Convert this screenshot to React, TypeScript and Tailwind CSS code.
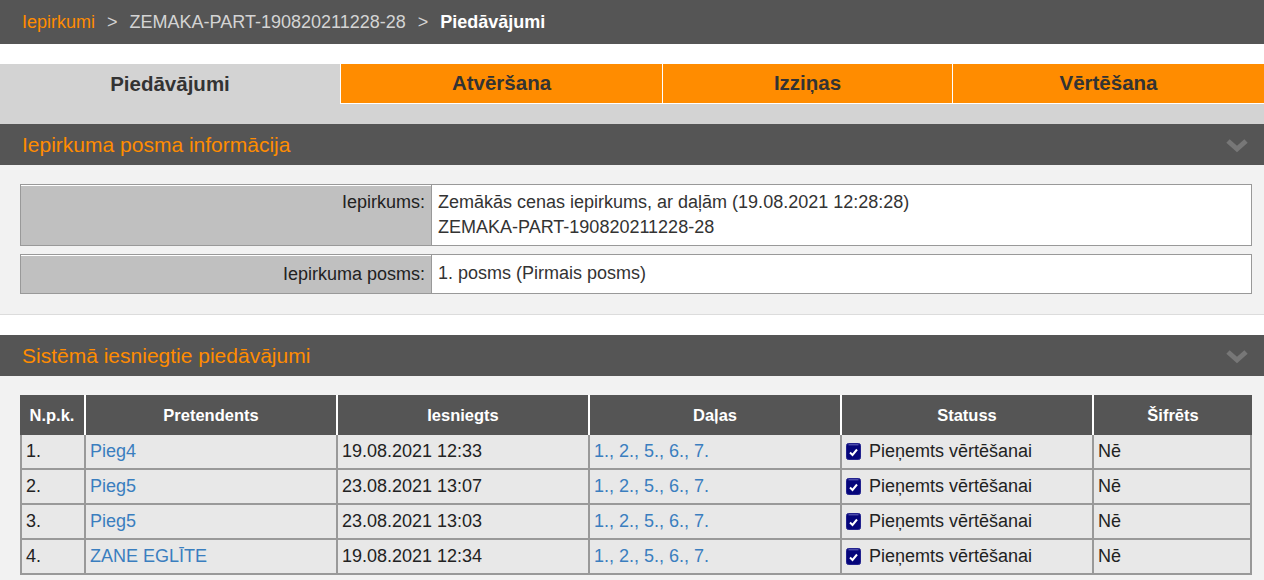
import React from "react";

const rows = [
  { n: "1.", name: "Pieg4", date: "19.08.2021 12:33" },
  { n: "2.", name: "Pieg5", date: "23.08.2021 13:07" },
  { n: "3.", name: "Pieg5", date: "23.08.2021 13:03" },
  { n: "4.", name: "ZANE EGLĪTE", date: "19.08.2021 12:34" },
];

function Chevron() {
  return (
    <svg width="22" height="16" viewBox="0 0 22 16" className="shrink-0">
      <polyline
        points="2,4 11,12 20,4"
        fill="none"
        stroke="#777777"
        strokeWidth="5"
        strokeLinejoin="miter"
      />
    </svg>
  );
}

function CheckIcon() {
  return (
    <svg width="15" height="17" viewBox="0 0 15 17" className="mr-[8px] shrink-0">
      <rect x="0.5" y="0.5" width="14" height="16" rx="2" fill="#05057a" stroke="#22228e" />
      <path d="M2.5 1.8 H12.5" stroke="#6a6ac0" strokeWidth="1" />
      <path d="M4 9.5 L6.5 12 L11 6.5" fill="none" stroke="#fff" strokeWidth="2" />
    </svg>
  );
}

function SectionHeader({ title }: { title: string }) {
  return (
    <div className="flex h-[41px] items-center justify-between bg-[#555555] pl-[22px] pr-[16px]">
      <span className="text-[21px] text-[#ff8c00]">{title}</span>
      <Chevron />
    </div>
  );
}

export default function App() {
  return (
    <div className="min-h-[580px] bg-white font-['Liberation_Sans',Arial,sans-serif] text-[18px] text-[#222]">
      {/* breadcrumb */}
      <div className="flex h-[44px] items-center bg-[#555555] px-[22px] text-[#d4d4d4]">
        <span className="text-[#ff8c00]">Iepirkumi</span>
        <span className="mx-[12px]">&gt;</span>
        <span>ZEMAKA-PART-190820211228-28</span>
        <span className="mx-[12px]">&gt;</span>
        <span className="font-bold text-white">Piedāvājumi</span>
      </div>

      {/* tabs */}
      <div className="mt-[20px] bg-[#d3d3d3] pb-[20px]">
        <div className="flex h-[40px] text-[20.5px] font-bold text-[#333]">
          <div className="flex w-[340px] items-center justify-center">Piedāvājumi</div>
          <div className="flex w-[322px] items-center justify-center border-b border-l border-white bg-[#ff8c00]">
            Atvēršana
          </div>
          <div className="flex w-[290px] items-center justify-center border-b border-l border-white bg-[#ff8c00]">
            Izziņas
          </div>
          <div className="flex flex-1 items-center justify-center border-b border-l border-white bg-[#ff8c00]">
            Vērtēšana
          </div>
        </div>
      </div>

      {/* section 1 */}
      <SectionHeader title="Iepirkuma posma informācija" />
      <div className="border-b border-[#dcdcdc] bg-[#f2f2f2] pb-[20px] pl-[20px] pr-[12px] pt-[19px] text-[#333]">
        <div className="flex flex-col gap-[8px] leading-[25px]">
          <div className="flex border border-[#999]">
            <div className="w-[410px] shrink-0 border-t border-white bg-[#c0c0c0] px-[6px] py-[4px] text-right text-[#222]">
              Iepirkums:
            </div>
            <div className="flex-1 border-l border-[#999] bg-white px-[6px] py-[5px]">
              <div>Zemākās cenas iepirkums, ar daļām (19.08.2021 12:28:28)</div>
              <div>ZEMAKA-PART-190820211228-28</div>
            </div>
          </div>
          <div className="flex border border-[#999]">
            <div className="w-[410px] shrink-0 border-t border-white bg-[#c0c0c0] px-[6px] py-[6px] text-right text-[#222]">
              Iepirkuma posms:
            </div>
            <div className="flex-1 border-l border-[#999] bg-white px-[6px] py-[6px]">
              1. posms (Pirmais posms)
            </div>
          </div>
        </div>
      </div>

      <div className="h-[20px] bg-white" />

      {/* section 2 */}
      <SectionHeader title="Sistēmā iesniegtie piedāvājumi" />
      <div className="bg-[#f2f2f2] px-[20px] pb-[20px] pt-[19px]">
        <table className="w-[1232px] table-fixed border-separate border-spacing-0">
          <colgroup>
            <col className="w-[66px]" />
            <col className="w-[252px]" />
            <col className="w-[252px]" />
            <col className="w-[252px]" />
            <col className="w-[252px]" />
            <col className="w-[158px]" />
          </colgroup>
          <thead>
            <tr className="h-[40px] bg-[#555555] text-[16.5px] font-bold text-white">
              <th className="border-r-2 border-white">N.p.k.</th>
              <th className="border-r-2 border-white">Pretendents</th>
              <th className="border-r-2 border-white">Iesniegts</th>
              <th className="border-r-2 border-white">Daļas</th>
              <th className="border-r-2 border-white">Statuss</th>
              <th>Šifrēts</th>
            </tr>
          </thead>
          <tbody>
            {rows.map((r, i) => (
              <tr key={i} className="h-[35px] bg-[#e8e8e8]">
                <td className="border-b-2 border-l-2 border-r-2 border-[#999] px-[4px]">{r.n}</td>
                <td className="border-b-2 border-r-2 border-[#999] px-[4px] text-[#3a7ebf]">{r.name}</td>
                <td className="border-b-2 border-r-2 border-[#999] px-[4px]">{r.date}</td>
                <td className="border-b-2 border-r-2 border-[#999] px-[4px] text-[#3a7ebf]">
                  1., 2., 5., 6., 7.
                </td>
                <td className="border-b-2 border-r-2 border-[#999] px-[4px]">
                  <div className="flex items-center">
                    <CheckIcon />
                    Pieņemts vērtēšanai
                  </div>
                </td>
                <td className="border-b-2 border-r-2 border-[#999] px-[4px]">Nē</td>
              </tr>
            ))}
          </tbody>
        </table>
      </div>
    </div>
  );
}
